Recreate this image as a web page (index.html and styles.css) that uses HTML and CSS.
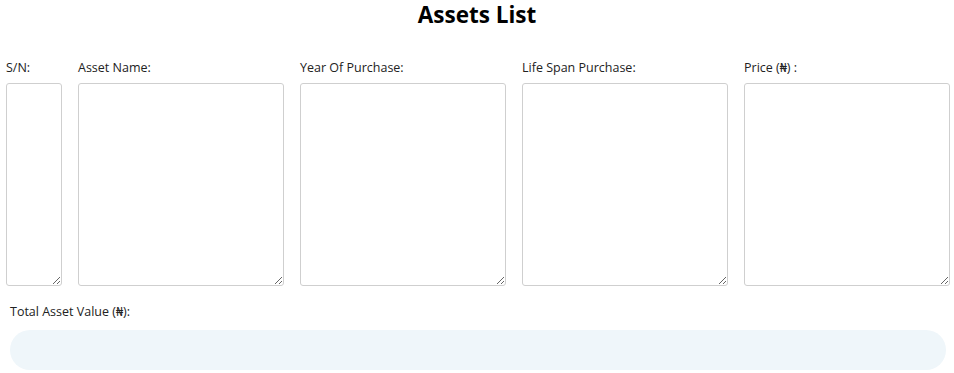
FILE: index.html
```html
<!DOCTYPE html>
<html lang="en">
<head>
<meta charset="utf-8">
<title>Assets List</title>
<link rel="stylesheet" href="styles.css">
</head>
<body>
<h1 class="title">Assets List</h1>
<div class="grid">
  <div class="field">
    <label class="label">S/N:</label>
    <textarea class="box"></textarea>
  </div>
  <div class="field">
    <label class="label">Asset Name:</label>
    <textarea class="box"></textarea>
  </div>
  <div class="field">
    <label class="label">Year Of Purchase:</label>
    <textarea class="box"></textarea>
  </div>
  <div class="field">
    <label class="label">Life Span Purchase:</label>
    <textarea class="box"></textarea>
  </div>
  <div class="field">
    <label class="label">Price (₦) :</label>
    <textarea class="box"></textarea>
  </div>
</div>
<div class="total">
  <label class="label">Total Asset Value (₦):</label>
  <input class="total-input" type="text">
</div>
</body>
</html>
```
FILE: styles.css
```css
html, body {
  margin: 0;
  padding: 0;
  background: #fff;
}
body {
  font-family: "Open Sans", "Noto Sans", sans-serif;
  color: #222;
}
.title {
  margin: 0;
  padding-top: 0;
  font-size: 22.5px;
  line-height: 30px;
  font-weight: 700;
  text-align: center;
  color: #000;
}
.grid {
  display: grid;
  grid-template-columns: 56px repeat(4, 1fr);
  column-gap: 16px;
  padding: 0 4px 0 6px;
  margin-top: 29px;
}
.field {
  display: flex;
  flex-direction: column;
}
.label {
  font-size: 12.5px;
  line-height: 18px;
  color: #222;
}
.box {
  margin-top: 6px;
  box-sizing: border-box;
  height: 203px;
  width: 100%;
  border: 1px solid #cfcfcf;
  border-radius: 3px;
  resize: vertical;
  background: #fff;
}
.total {
  display: flex;
  flex-direction: column;
  padding: 0 8px 0 10px;
  margin-top: 17px;
}
.total-input {
  margin-top: 9px;
  box-sizing: border-box;
  height: 40px;
  border: none;
  border-radius: 20px;
  background: #eff6fa;
  width: 100%;
}
```
